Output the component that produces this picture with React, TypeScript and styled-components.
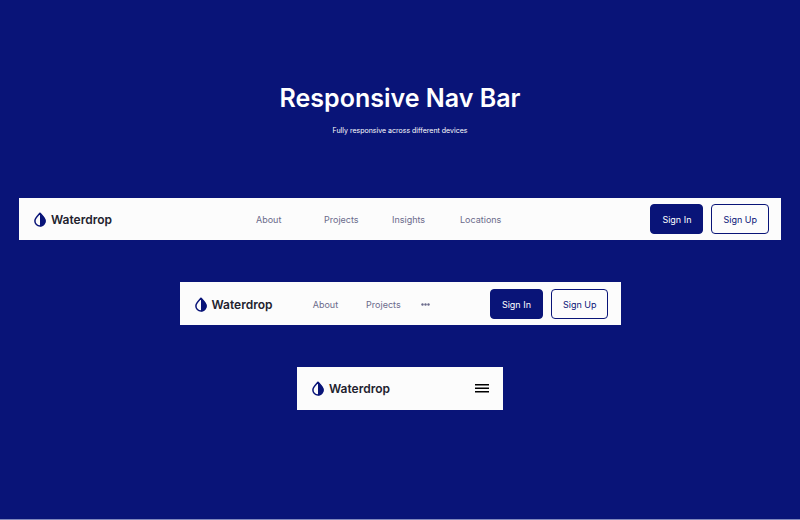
import React from "react";
import styled, { createGlobalStyle } from "styled-components";

const navy = "#091478";
const paper = "#fcfcfc";

const GlobalStyle = createGlobalStyle`
  *, *::before, *::after { box-sizing: border-box; }
  body {
    margin: 0;
    background: ${navy};
    font-family: Inter, "Liberation Sans", sans-serif;
  }
`;

const Page = styled.main`
  display: flex;
  flex-direction: column;
  align-items: center;
  min-height: 100vh;
  padding: 80px 19px 40px;
  background: ${navy};
  border-bottom: 1px solid #8087bb;
`;

const Heading = styled.header`
  display: flex;
  flex-direction: column;
  align-items: center;
  gap: 10px;
  color: #ffffff;
  text-align: center;
`;

const Title = styled.h1`
  margin: 0;
  font-size: 25px;
  font-weight: 600;
  line-height: 36px;
`;

const Subtitle = styled.p`
  margin: 0;
  font-size: 7px;
  line-height: 10px;
`;

const Examples = styled.div`
  display: flex;
  flex-direction: column;
  align-items: center;
  gap: 42px;
  width: 100%;
  margin-top: 62px;
`;

const barPadding = {
  desktop: "6px 12px 6px 15px",
  tablet: "7px 12px 6px 15px",
  mobile: "6px 14px 7px 15px",
};

const barWidth = { desktop: "none", tablet: "441px", mobile: "206px" };

const Bar = styled.section<{ $size: keyof typeof barPadding }>`
  display: flex;
  align-items: center;
  justify-content: space-between;
  width: 100%;
  max-width: ${({ $size }) => barWidth[$size]};
  padding: ${({ $size }) => barPadding[$size]};
  background: ${paper};
`;

const Brand = styled.a`
  display: flex;
  align-items: center;
  gap: 5px;
  height: 30px;
  color: #22222e;
  font-size: 12px;
  font-weight: 600;
  text-decoration: none;
`;

const DropSvg = styled.svg`
  width: 12px;
  height: 15px;
  color: ${navy};
`;

const Links = styled.nav<{ $wide?: boolean }>`
  display: ${({ $wide }) => ($wide ? "grid" : "flex")};
  grid-template-columns: repeat(3, 68px) auto;
  align-items: center;
  gap: ${({ $wide }) => ($wide ? 0 : 28)}px;
  padding-right: ${({ $wide }) => ($wide ? 5 : 20)}px;
`;

const Link = styled.a`
  padding-top: 1px;
  color: #6b6b8b;
  font-size: 9px;
  line-height: 12px;
  text-decoration: none;
`;

const IconButton = styled.button`
  display: flex;
  padding: 0;
  border: 0;
  background: none;
  color: #000000;
  cursor: pointer;
`;

const MoreButton = styled(IconButton)`
  margin-left: -8px;
  color: #6b6b8b;
`;

const Actions = styled.div`
  display: flex;
  gap: 8px;
`;

const ActionButton = styled.button<{ $filled?: boolean }>`
  height: 30px;
  padding: 1px 11px 0;
  border: 1px solid ${navy};
  border-radius: 4px;
  background: ${({ $filled }) => ($filled ? navy : paper)};
  color: ${({ $filled }) => ($filled ? "#ffffff" : navy)};
  font-family: inherit;
  font-size: 9px;
  line-height: 12px;
  cursor: pointer;
`;

function Logo() {
  return (
    <Brand href="#">
      <DropSvg viewBox="0 0 12 15" aria-hidden="true">
        <path
          d="M6 1.2C4.6 3 .9 5.7 .9 8.9a5.1 5.1 0 0 0 10.2 0C11.1 5.7 7.4 3 6 1.2Z"
          fill="none"
          stroke="currentColor"
          strokeWidth="1.5"
          strokeLinejoin="round"
        />
        <path d="M6 1v13.5A5.3 5.3 0 0 0 11.5 9C11.5 5.5 7.5 3 6 1Z" fill="currentColor" />
      </DropSvg>
      Waterdrop
    </Brand>
  );
}

function AuthActions() {
  return (
    <Actions>
      <ActionButton type="button" $filled>Sign In</ActionButton>
      <ActionButton type="button">Sign Up</ActionButton>
    </Actions>
  );
}

export default function App() {
  return (
    <>
      <GlobalStyle />
      <Page>
        <Heading>
          <Title>Responsive Nav Bar</Title>
          <Subtitle>Fully responsive across different devices</Subtitle>
        </Heading>
        <Examples>
          <Bar $size="desktop">
            <Logo />
            <Links $wide aria-label="Desktop">
              {["About", "Projects", "Insights", "Locations"].map((name) => (
                <Link key={name} href="#">{name}</Link>
              ))}
            </Links>
            <AuthActions />
          </Bar>
          <Bar $size="tablet">
            <Logo />
            <Links aria-label="Tablet">
              <Link href="#">About</Link>
              <Link href="#">Projects</Link>
              <MoreButton type="button" aria-label="More links">
                <svg width="9" height="3" viewBox="0 0 9 3" fill="currentColor" aria-hidden="true">
                  <circle cx="1.5" cy="1.5" r="1.2" />
                  <circle cx="4.5" cy="1.5" r="1.2" />
                  <circle cx="7.5" cy="1.5" r="1.2" />
                </svg>
              </MoreButton>
            </Links>
            <AuthActions />
          </Bar>
          <Bar $size="mobile">
            <Logo />
            <IconButton type="button" aria-label="Open menu">
              <svg width="14" height="10" viewBox="0 0 14 10" fill="currentColor" aria-hidden="true">
                <path d="M0 1h14v1.6H0zM0 4.6h14v1.4H0zM0 8h14v1.6H0z" />
              </svg>
            </IconButton>
          </Bar>
        </Examples>
      </Page>
    </>
  );
}
